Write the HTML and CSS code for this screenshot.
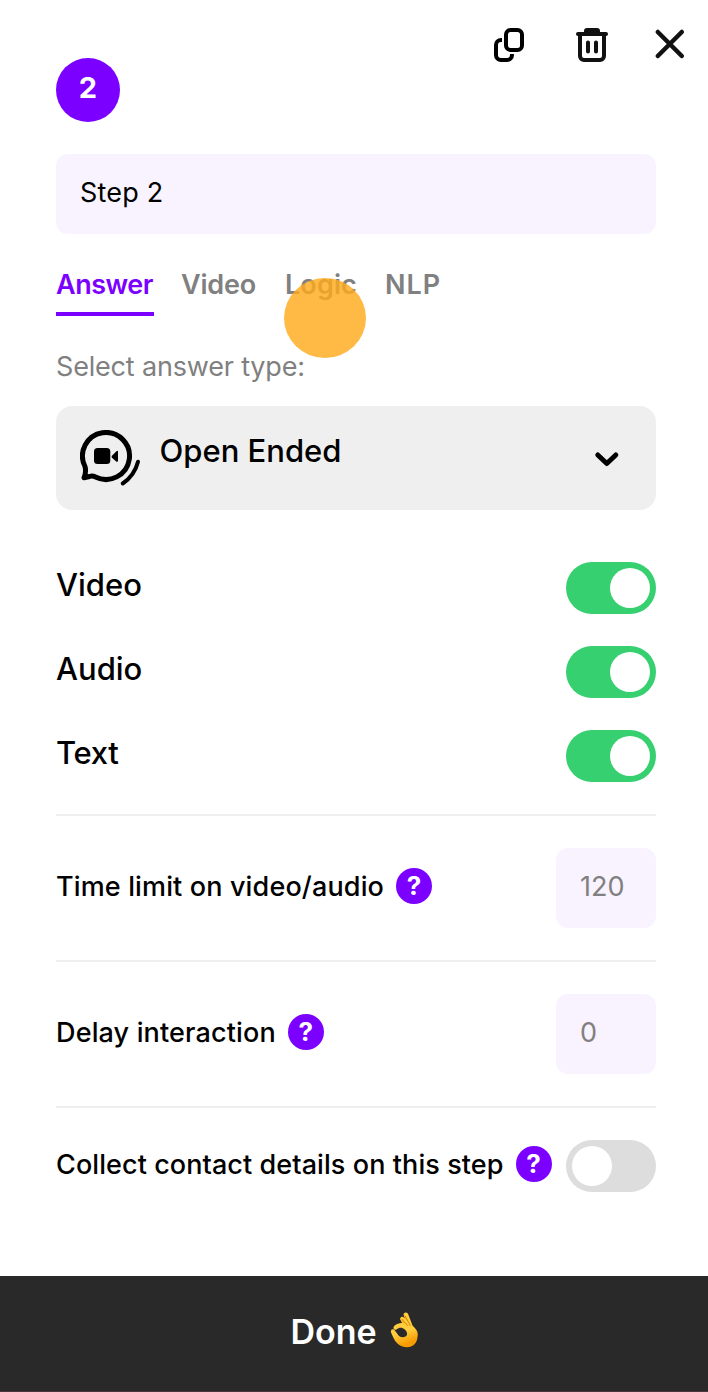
FILE: index.html
```html
<!DOCTYPE html>
<html lang="en">
<head>
    <meta charset="UTF-8">
    <meta name="viewport" content="width=device-width, initial-scale=1.0">
    <title>Step 2</title>
    <link rel="stylesheet" href="styles.css">
</head>
<body>

<div class="panel">
    <div class="toolbar">
        <svg class="icon-copy" width="32" height="36" viewBox="0 0 32 36" fill="none" stroke="#000" stroke-width="4">
            <rect x="13" y="3" width="16" height="20" rx="4.500"/>
            <path d="M9 13H8a5 5 0 0 0-5 5v10a5 5 0 0 0 5 5h6a5 5 0 0 0 5-5v-1"/>
        </svg>
        <svg class="icon-trash" width="32" height="36" viewBox="0 0 32 36" fill="none" stroke="#111" stroke-width="4">
            <path d="M8 5V4a3 3 0 0 1 3-3h10a3 3 0 0 1 3 3v1z" fill="#111" stroke="none"/>
            <path d="M2 7h28" stroke-linecap="round"/>
            <path d="M4 8v21a4 4 0 0 0 4 4h16a4 4 0 0 0 4-4V8"/>
            <path d="M12 15.500v9M20 15.500v9" stroke-linecap="round"/>
        </svg>
        <svg class="icon-close" width="32" height="32" viewBox="0 0 32 32" fill="none" stroke="#111" stroke-width="4.500" stroke-linecap="round">
            <path d="M3.800 4l24 24M27.800 4l-24 24"/>
        </svg>
    </div>

    <div class="content">
        <div class="badge">2</div>
        <div class="field step-name">Step 2</div>

        <div class="tabs">
            <div class="tab tab-answer active">Answer</div>
            <div class="tab tab-video">Video</div>
            <div class="tab tab-logic">Logic<span class="pointer"></span></div>
            <div class="tab tab-nlp">NLP</div>
        </div>

        <div class="label"><span>Select answer type:</span></div>
        <div class="select">
            <svg class="icon-type" width="64" height="60" viewBox="0 0 64 60" fill="none" stroke="#000" stroke-width="5" stroke-linecap="round" stroke-linejoin="round">
                <path d="M5 36.500A23.500 23.500 0 1 1 15.500 47Q12.500 45.500 9.500 46.500L4 47.700Q6.500 42 5 36.500z"/>
                <rect x="14" y="18" width="16.300" height="16" rx="3.500" fill="#000" stroke="none"/>
                <path d="M31.700 26l4.500-4.500Q38 20 38 22v8.500q0 2-1.800.9L31.700 27.500z" fill="#000" stroke="none"/>
                <path d="M58 31.700Q54.500 45.500 42.700 53.500" stroke-width="4"/>
            </svg>
            <span class="select-text">Open Ended</span>
            <svg class="icon-down" width="26" height="18" viewBox="0 0 26 18" fill="none" stroke="#000" stroke-width="5" stroke-linecap="round" stroke-linejoin="round">
                <path d="M3.800 5l9 8.500 9-8.500"/>
            </svg>
        </div>

        <div class="switches">
            <div class="switch-row"><span>Video</span><div class="switch on"></div></div>
            <div class="switch-row"><span>Audio</span><div class="switch on"></div></div>
            <div class="switch-row"><span class="text-label">Text</span><div class="switch on"></div></div>
        </div>

        <div class="option">
            <span class="time-label">Time limit on video/audio</span>
            <span class="help">?</span>
            <div class="field number">120</div>
        </div>
        <div class="option">
            <span class="delay-label">Delay interaction</span>
            <span class="help">?</span>
            <div class="field number">0</div>
        </div>
        <div class="option contact">
            <span class="contact-label">Collect contact details on this step</span>
            <span class="help">?</span>
            <div class="switch"></div>
        </div>
    </div>

    <div class="footer">
        <span>Done</span>
        <svg width="30" height="36" viewBox="0 0 30 36">
            <defs>
                <linearGradient id="skin" x1="0" y1="0" x2="0.300" y2="1">
                    <stop offset="0" stop-color="#ffd044"/>
                    <stop offset="0.650" stop-color="#ffcc3c"/>
                    <stop offset="1" stop-color="#f59a00"/>
                </linearGradient>
            </defs>
            <path d="M13.500 2.500Q14-.3 16.500 1.700L20.500 12 17 14z" fill="#f8b51c"/>
            <path d="M10 7Q10.500 4.200 13.500 6.500L19 14 15 17z" fill="#f8b51c"/>
            <path d="M14.300 2.200C14.500-.3 17.800.1 18.300 2.500L22.500 13.500C26 17 28.500 20 27.600 24 27.500 30 24 35.200 17 35.200 9 35 5.500 30 3.300 25.500L1 20.500C.2 17 3.500 16.400 5 18.800L7.500 22C8.500 25 12.500 26 15.500 24.500 18 23 17.500 20 14.800 17.500 12 15 9 15.500 6.500 17.400 3.500 18.500 2.500 15.500 4.500 13.800 8 10.600 13 10.400 17.200 12.200L10.600 7.500C10 4.500 12.500 4 14.300 5.700L18.300 11z" fill="url(#skin)"/>
            <path d="M15.200 4l5.300 10M11.500 6.800l6.200 6.800" fill="none" stroke="#d98200" stroke-width="1"/>
        </svg>
    </div>
</div>

</body>
</html>
```

FILE: styles.css
```css
* {
    box-sizing: border-box;
}
body {
    margin: 0;
    background-color: #ffffff;
    color: #000000;
    font-family: Inter, "Liberation Sans", sans-serif;
    font-size: 27px;
    font-weight: 500;
}
svg {
    display: block;
    flex-shrink: 0;
}
.panel {
    display: flex;
    flex-direction: column;
    height: 1392px;
    overflow: hidden;
}
.toolbar {
    display: flex;
    justify-content: flex-end;
    height: 58px;
    padding: 27px 22px 0 0;
}
.icon-trash {
    margin: 0 46px 0 51px;
}
.icon-close {
    margin-top: 1px;
}
.content {
    flex: 1;
    padding: 0 52px 0 56px;
}
.badge {
    width: 64px;
    height: 64px;
    border-radius: 50%;
    background-color: #7b00ff;
    color: #ffffff;
    font-size: 29px;
    font-weight: 700;
    line-height: 60px;
    text-align: center;
}
.field {
    height: 80px;
    border-radius: 12px;
    background-color: #f8f3ff;
    padding-left: 24px;
    font-weight: 400;
    line-height: 78px;
}
.step-name {
    margin-top: 32px;
    letter-spacing: 0.2px;
}
.tabs {
    display: flex;
    margin-top: 32px;
    height: 50px;
    color: #808080;
    font-weight: 600;
    letter-spacing: -0.2px;
    line-height: 38px;
}
.tab {
    position: relative;
    height: 50px;
    white-space: nowrap;
}
.tab-answer {
    width: 98px;
    margin-right: 27px;
}
.tab-video {
    width: 75px;
    margin-right: 29px;
}
.tab-logic {
    width: 72px;
    margin-right: 28px;
    letter-spacing: 0.1px;
}
.tab-nlp {
    letter-spacing: 1px;
}
.active {
    color: #7b00ff;
    letter-spacing: -0.5px;
    border-bottom: 4px solid #7b00ff;
}
/* click marker over the tab */
.pointer {
    position: absolute;
    left: -1px;
    top: 12px;
    width: 82px;
    height: 80px;
    border-radius: 50%;
    background-color: rgba(255, 170, 28, 0.82);
}
.label {
    height: 90px;
    padding-top: 35px;
    color: #808080;
    font-weight: 400;
    letter-spacing: -0.18px;
    line-height: 32px;
}
.select {
    display: flex;
    height: 104px;
    padding: 24px 36px 0 24px;
    border-radius: 16px;
    background-color: #efefef;
}
.select-text {
    margin-left: 15.5px;
    font-size: 31px;
    line-height: 42px;
}
.icon-down {
    margin: 20px 0 0 auto;
}
.switches {
    display: flex;
    flex-direction: column;
    gap: 32px;
    margin-top: 52px;
    padding-bottom: 32px;
}
.switch-row {
    display: flex;
    justify-content: space-between;
    height: 52px;
    font-size: 31px;
    line-height: 46px;
}
.text-label {
    letter-spacing: -0.3px;
}
.switch {
    width: 90px;
    height: 52px;
    padding: 6px;
    border-radius: 26px;
    background-color: #dddddd;
}
.switch::before {
    content: "";
    display: block;
    width: 40px;
    height: 40px;
    border-radius: 50%;
    background-color: #ffffff;
}
.on {
    background-color: #37d070;
}
.on::before {
    margin-left: auto;
}
.option {
    display: flex;
    align-items: center;
    height: 146px;
    border-top: 2px solid #efefef;
    white-space: nowrap;
}
.time-label {
    padding-bottom: 4px;
    letter-spacing: 0.14px;
}
.delay-label {
    padding-bottom: 4px;
    letter-spacing: 0.14px;
}
.contact-label {
    padding-bottom: 4px;
    letter-spacing: 0.08px;
}
.help {
    width: 36px;
    height: 36px;
    margin: -4px 0 0 12px;
    border-radius: 50%;
    background-color: #7b00ff;
    color: #ffffff;
    font-size: 26px;
    font-weight: 700;
    line-height: 36px;
    text-align: center;
}
.number {
    width: 100px;
    margin-left: auto;
    color: #808080;
}
.contact {
    height: 118px;
}
.contact .switch {
    margin-left: auto;
}
.footer {
    display: flex;
    justify-content: center;
    height: 116px;
    padding: 36px 0 0 2px;
    border-bottom: 1px solid #4b3540;
    background-color: #292929;
    color: #ffffff;
    font-size: 34px;
    font-weight: 600;
    line-height: 40px;
}
.footer svg {
    margin: 0 0 0 13px;
}
```
